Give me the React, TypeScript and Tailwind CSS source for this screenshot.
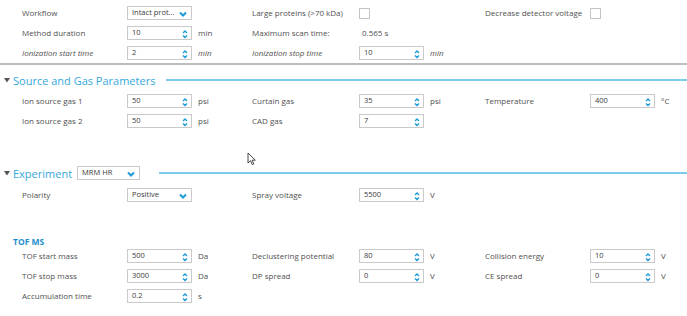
import React from "react";

const font = { fontFamily: '"Open Sans", "Noto Sans", sans-serif' };

function Spin() {
  return (
    <svg width="6" height="10" viewBox="0 0 6 10" className="absolute right-[3px] top-[2px]">
      <polyline points="1,4 3,2 5,4" fill="none" stroke="#1c9bd8" strokeWidth="1.4" />
      <polyline points="1,6.5 3,8.5 5,6.5" fill="none" stroke="#1c9bd8" strokeWidth="1.4" />
    </svg>
  );
}

function Chevron() {
  return (
    <svg width="8" height="6" viewBox="0 0 8 6" className="absolute right-[4px] top-[4px]">
      <polyline points="1,1.5 4,4.5 7,1.5" fill="none" stroke="#1c9bd8" strokeWidth="2" />
    </svg>
  );
}

function NumInput({ value }: { value: string }) {
  return (
    <div className="relative w-[65px] h-[14px] border border-[#cacaca] bg-white shadow-[inset_0_0_1px_rgba(0,0,0,0.08)] flex items-center pl-[4px] text-[7.5px] text-[#3a3a3a]">
      {value}
      <Spin />
    </div>
  );
}

function Select({ value, w = "w-[65px]" }: { value: string; w?: string }) {
  return (
    <div className={`relative ${w} h-[14px] border border-[#cacaca] bg-white flex items-center pl-[4px] text-[7.5px] text-[#3a3a3a]`}>
      {value}
      <Chevron />
    </div>
  );
}

function Check() {
  return <div className="w-[11px] h-[11px] border border-[#c4c4c4] bg-white" />;
}

function Label({ children, italic, w }: { children: React.ReactNode; italic?: boolean; w: string }) {
  return (
    <div className={`${w} shrink-0 text-[8px] text-[#505050] whitespace-nowrap ${italic ? "italic" : ""}`}>{children}</div>
  );
}

function Unit({ children, italic }: { children: React.ReactNode; italic?: boolean }) {
  return <div className={`ml-[6px] text-[8px] text-[#505050] ${italic ? "italic" : ""}`}>{children}</div>;
}

type Cell = {
  label: string;
  italic?: boolean;
  control: React.ReactNode;
  unit?: string;
} | null;

function Row({ cells }: { cells: Cell[] }) {
  const widths = ["w-[252px] pl-[22px]", "w-[233px]", "flex-1"];
  const lw = ["w-[105px]", "w-[107px]", "w-[105px]"];
  return (
    <div className="flex h-[14px] items-center">
      {cells.map((c, i) => (
        <div key={i} className={`${widths[i]} flex items-center shrink-0`}>
          {c && (
            <>
              <Label w={lw[i]} italic={c.italic}>
                {c.label}
              </Label>
              {c.control}
              {c.unit && <Unit italic={c.italic}>{c.unit}</Unit>}
            </>
          )}
        </div>
      ))}
    </div>
  );
}

function Triangle() {
  return (
    <svg width="6" height="5" viewBox="0 0 6 5" className="ml-[4px] mr-[3px]">
      <polygon points="0,0 6,0 3,4.5" fill="#555" />
    </svg>
  );
}

export default function App() {
  return (
    <div className="relative w-[687px] h-[316px] bg-white overflow-hidden" style={font}>
      <div className="pt-[6px] flex flex-col gap-[6px]">
        <Row
          cells={[
            { label: "Workflow", control: <Select value="Intact prot..." /> },
            { label: "Large proteins (>70 kDa)", control: <Check /> },
            { label: "Decrease detector voltage", control: <Check /> },
          ]}
        />
        <Row
          cells={[
            { label: "Method duration", control: <NumInput value="10" />, unit: "min" },
            {
              label: "Maximum scan time:",
              control: <div className="pl-[3px] text-[8px] text-[#505050]">0.565 s</div>,
            },
            null,
          ]}
        />
        <Row
          cells={[
            { label: "Ionization start time", italic: true, control: <NumInput value="2" />, unit: "min" },
            { label: "Ionization stop time", italic: true, control: <NumInput value="10" />, unit: "min" },
            null,
          ]}
        />
      </div>

      <div className="mt-[3px] h-[2px] bg-[#bdbdbd]" />

      <div className="mt-[5px] h-[20px] flex items-center">
        <Triangle />
        <div className="text-[11px] text-[#35a8dc] leading-none whitespace-nowrap">Source and Gas Parameters</div>
        <div className="ml-[11px] flex-1 h-[1.5px] bg-[#7ccbec]" />
      </div>

      <div className="mt-[4px] flex flex-col gap-[6px]">
        <Row
          cells={[
            { label: "Ion source gas 1", control: <NumInput value="50" />, unit: "psi" },
            { label: "Curtain gas", control: <NumInput value="35" />, unit: "psi" },
            { label: "Temperature", control: <NumInput value="400" />, unit: "°C" },
          ]}
        />
        <Row
          cells={[
            { label: "Ion source gas 2", control: <NumInput value="50" />, unit: "psi" },
            { label: "CAD gas", control: <NumInput value="7" /> },
            null,
          ]}
        />
      </div>

      <div className="mt-[35px] h-[20px] flex items-center">
        <Triangle />
        <div className="text-[11px] text-[#35a8dc] leading-none whitespace-nowrap">Experiment</div>
        <div className="ml-[5px]">
          <Select value="MRM HR" w="w-[63px]" />
        </div>
        <div className="ml-[19px] flex-1 h-[1.5px] bg-[#7ccbec]" />
      </div>

      <div className="mt-[5px] flex flex-col gap-[6px]">
        <Row
          cells={[
            { label: "Polarity", control: <Select value="Positive" /> },
            { label: "Spray voltage", control: <NumInput value="5500" />, unit: "V" },
            null,
          ]}
        />
      </div>

      <div className="mt-[34px] h-[13px] flex items-center pl-[13px] text-[8.5px] font-bold text-[#1d8fcc]">TOF MS</div>

      <div className="flex flex-col gap-[6px]">
        <Row
          cells={[
            { label: "TOF start mass", control: <NumInput value="500" />, unit: "Da" },
            { label: "Declustering potential", control: <NumInput value="80" />, unit: "V" },
            { label: "Collision energy", control: <NumInput value="10" />, unit: "V" },
          ]}
        />
        <Row
          cells={[
            { label: "TOF stop mass", control: <NumInput value="3000" />, unit: "Da" },
            { label: "DP spread", control: <NumInput value="0" />, unit: "V" },
            { label: "CE spread", control: <NumInput value="0" />, unit: "V" },
          ]}
        />
        <Row
          cells={[
            { label: "Accumulation time", control: <NumInput value="0.2" />, unit: "s" },
            null,
            null,
          ]}
        />
      </div>

      <svg
        width="10"
        height="14"
        viewBox="0 0 10 14"
        className="absolute left-[247px] top-[152px]"
      >
        <path d="M1,1 L1,11 L3.5,8.7 L5.3,12.6 L6.8,11.9 L5.1,8.2 L8.3,8.2 Z" fill="white" stroke="#333" strokeWidth="0.9" strokeLinejoin="round" />
      </svg>
    </div>
  );
}
